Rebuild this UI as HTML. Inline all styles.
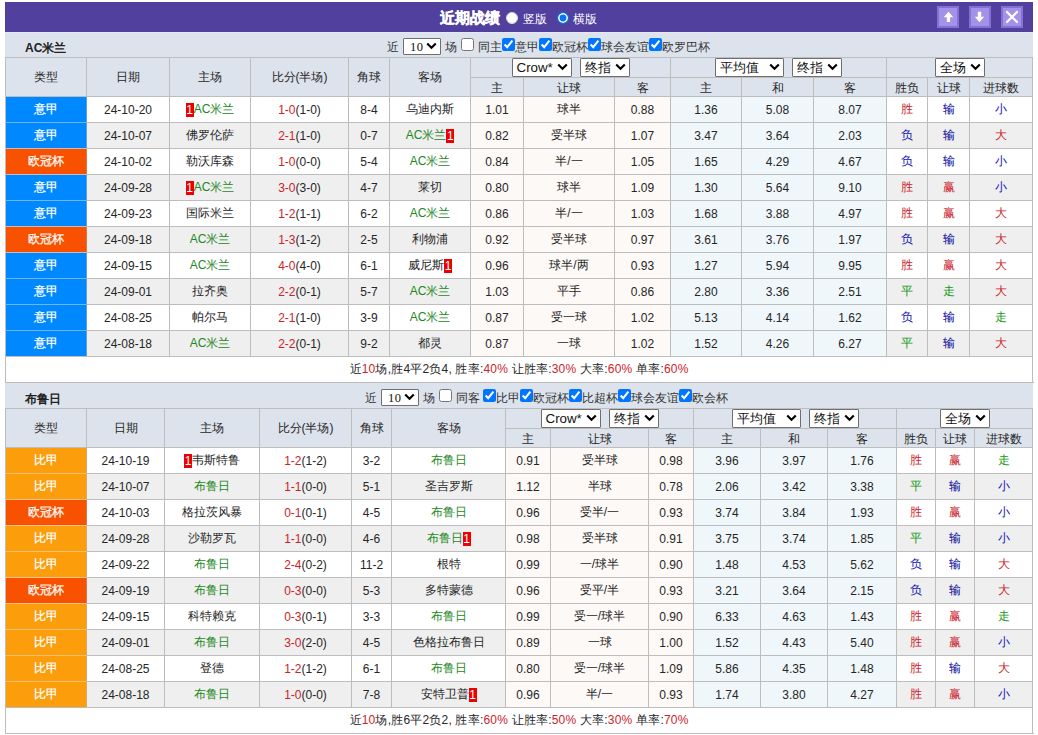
<!DOCTYPE html>
<html><head><meta charset="utf-8"><style>
*{box-sizing:border-box}
html,body{margin:0;padding:0;background:#fff;width:1038px;height:735px;overflow:hidden;
 font-family:"Liberation Sans",sans-serif;font-size:12px;color:#262626}
.a{position:absolute;white-space:nowrap}
.bar{position:absolute;left:5px;top:2px;width:1028px;height:30px;background:#51409e}
.title{left:440px;top:9px;color:#fff;font-weight:bold;-webkit-text-stroke:0.4px #fff;font-size:15px;line-height:17px}
.rlab{top:12px;color:#fff;font-size:12px;line-height:14px}
.rad{position:absolute;width:12px;height:12px;border-radius:50%;top:12px}
.rad.off{background:#fff;border:1px solid #d8d8e8}
.rad.on{background:#0a74f0;border:1.6px solid #0a74f0;box-shadow:inset 0 0 0 1.6px #fff}
.btn{position:absolute;top:6px;width:22px;height:22px;background:#a393e8;border:2px solid #8272d4}
.btn svg{position:absolute;left:-2px;top:-2px}
.sec{position:absolute;left:5px;width:1028px;height:25px;background:#dde3ec}
.lab{position:absolute;left:20px;top:9px;font-weight:bold;color:#222;font-size:12px;line-height:14px}
.ot{color:#333;font-size:12px;line-height:14px}
.cbx{position:absolute;margin:0;width:13px;height:13px}
.fs{display:inline-block;position:relative;height:19px;border:1px solid #6f6f6f;border-radius:1px;background:#fff;vertical-align:top;text-align:left}
.fs.ml{margin-left:8px}
.fs .ft{position:absolute;left:4px;top:1px;font-size:13.333px;line-height:15px;color:#111}
.fs .chev{position:absolute;right:3px;top:4px}
.osel{position:absolute;height:17px}
.osel .ft{font-family:"Liberation Serif",serif;font-size:12.5px;top:1px;left:6px;letter-spacing:0.5px}
.osel .chev{top:3px}
.tb{position:absolute;left:5px;border-collapse:collapse;table-layout:fixed;width:1028px}
.tb td{border:1px solid #bdbdbd;text-align:center;padding:0;white-space:nowrap;overflow:hidden}
.tb tr.h1 td{background:#dde3ec;height:20px;vertical-align:top}
.tb tr.h2 td{background:#dde3ec;height:19px;padding-top:1px;line-height:16px}
.tb tr.h1 td[rowspan]{height:39px;vertical-align:middle}
.tb tr.od td,.tb tr.ev td{height:26px}
.tb tr.ev td{background:#efefef}
.tb tr td.oc{background:#fdf9f6}
.tb tr td.av{background:#f0f7fb}
.tb td.ty{color:#fff;-webkit-text-stroke:0.25px #fff}
.tA{background:#0088ff !important;border-right-color:#5f9fd8 !important}
.tB{background:#f85100 !important;border-right-color:#d87850 !important}
.tC{background:#fc9d0b !important;border-right-color:#d8a868 !important}
.tb tr.sm td{height:26px;background:#fff;letter-spacing:0.2px}
.g{color:#1e881e}
.cr{color:#cc2229}
.cb{color:#1111bb}
.cb2{color:#000099}
.cg{color:#119911}
.rc{font-style:normal;background:#e00;color:#fff;display:inline-block;width:8px;height:14px;line-height:14px;font-size:12px;vertical-align:-3px;overflow:hidden;position:relative;top:1px}
</style></head><body>
<div class="bar"></div>
<div class="a title">近期战绩</div>
<div class="rad off" style="left:506px"></div><div class="a rlab" style="left:523px">竖版</div>
<div class="rad on" style="left:557px"></div><div class="a rlab" style="left:573px">横版</div>
<div class="btn" style="left:937px"><svg width="22" height="22" viewBox="0 0 22 22"><path d="M11.45 5.8 L16.2 11.3 L13.1 11.3 L13.1 15.9 L9.8 15.9 L9.8 11.3 L6.7 11.3 Z" fill="#fff"/></svg></div>
<div class="btn" style="left:969px"><svg width="22" height="22" viewBox="0 0 22 22"><path d="M10.5 16.2 L15.1 10.8 L12.2 10.8 L12.2 5.8 L8.8 5.8 L8.8 10.8 L5.9 10.8 Z" fill="#fff"/></svg></div>
<div class="btn" style="left:1001px"><svg width="22" height="22" viewBox="0 0 22 22"><path d="M6 6 L16 16 M16 6 L6 16" stroke="#fff" stroke-width="2.2" stroke-linecap="round"/></svg></div>
<div class="sec" style="top:32px;border-top:1px solid #e8e6fa"><div class="lab" style="top:8px">AC米兰</div></div>
<div class="a ot" style="left:387px;top:40px">近</div>
<span class="fs osel" style="left:403px;top:38px;width:38px"><span class="ft">10</span><svg class="chev" width="11" height="8" viewBox="0 0 11 8"><path d="M1.2 1.5 L5.5 5.8 L9.8 1.5" fill="none" stroke="#000" stroke-width="2.1"/></svg></span>
<div class="a ot" style="left:445px;top:40px">场</div>
<input type="checkbox" class="cbx" style="left:461px;top:38px">
<div class="a ot" style="left:478px;top:40px">同主</div>
<input type="checkbox" class="cbx" style="left:502px;top:38px" checked>
<div class="a ot" style="left:515px;top:40px">意甲</div>
<input type="checkbox" class="cbx" style="left:539px;top:38px" checked>
<div class="a ot" style="left:552px;top:40px">欧冠杯</div>
<input type="checkbox" class="cbx" style="left:588px;top:38px" checked>
<div class="a ot" style="left:601px;top:40px">球会友谊</div>
<input type="checkbox" class="cbx" style="left:649px;top:38px" checked>
<div class="a ot" style="left:662px;top:40px">欧罗巴杯</div>
<table class="tb" style="top:57px">
<colgroup><col style="width:81px"><col style="width:83px"><col style="width:81px"><col style="width:98px"><col style="width:41px"><col style="width:81px"><col style="width:53px"><col style="width:91px"><col style="width:56px"><col style="width:71px"><col style="width:72px"><col style="width:73px"><col style="width:41px"><col style="width:42px"><col style="width:63px"></colgroup>
<tr class="h1"><td rowspan="2">类型</td><td rowspan="2">日期</td><td rowspan="2">主场</td><td rowspan="2">比分(半场)</td><td rowspan="2">角球</td><td rowspan="2">客场</td><td colspan="3"><span class="fs " style="width:60px"><span class="ft">Crow*</span><svg class="chev" width="11" height="8" viewBox="0 0 11 8"><path d="M1.2 1.5 L5.5 5.8 L9.8 1.5" fill="none" stroke="#000" stroke-width="2.1"/></svg></span><span class="fs ml" style="width:50px"><span class="ft">终指</span><svg class="chev" width="11" height="8" viewBox="0 0 11 8"><path d="M1.2 1.5 L5.5 5.8 L9.8 1.5" fill="none" stroke="#000" stroke-width="2.1"/></svg></span></td><td colspan="3"><span class="fs " style="width:69px"><span class="ft">平均值</span><svg class="chev" width="11" height="8" viewBox="0 0 11 8"><path d="M1.2 1.5 L5.5 5.8 L9.8 1.5" fill="none" stroke="#000" stroke-width="2.1"/></svg></span><span class="fs ml" style="width:50px"><span class="ft">终指</span><svg class="chev" width="11" height="8" viewBox="0 0 11 8"><path d="M1.2 1.5 L5.5 5.8 L9.8 1.5" fill="none" stroke="#000" stroke-width="2.1"/></svg></span></td><td colspan="3"><span class="fs " style="width:50px"><span class="ft">全场</span><svg class="chev" width="11" height="8" viewBox="0 0 11 8"><path d="M1.2 1.5 L5.5 5.8 L9.8 1.5" fill="none" stroke="#000" stroke-width="2.1"/></svg></span></td></tr>
<tr class="h2"><td>主</td><td>让球</td><td>客</td><td>主</td><td>和</td><td>客</td><td>胜负</td><td>让球</td><td>进球数</td></tr>
<tr class="od"><td class="ty tA" style="border-bottom-color:#72b6f1 !important">意甲</td><td>24-10-20</td><td><span class="g"><i class="rc">1</i>AC米兰</span></td><td><span class="cr">1-0</span>(1-0)</td><td>8-4</td><td><span>乌迪内斯</span></td><td class="oc">1.01</td><td class="oc">球半</td><td class="oc">0.88</td><td class="av">1.36</td><td class="av">5.08</td><td class="av">8.07</td><td><span class="cr">胜</span></td><td><span class="cb2">输</span></td><td><span class="cb">小</span></td></tr>
<tr class="ev"><td class="ty tA" style="border-bottom-color:#c4bdc5 !important">意甲</td><td>24-10-07</td><td><span>佛罗伦萨</span></td><td><span class="cr">2-1</span>(1-0)</td><td>0-7</td><td><span class="g">AC米兰<i class="rc">1</i></span></td><td class="oc">0.82</td><td class="oc">受半球</td><td class="oc">1.07</td><td class="av">3.47</td><td class="av">3.64</td><td class="av">2.03</td><td><span class="cb">负</span></td><td><span class="cb2">输</span></td><td><span class="cr">大</span></td></tr>
<tr class="od"><td class="ty tB" style="border-bottom-color:#c4bdc5 !important">欧冠杯</td><td>24-10-02</td><td><span>勒沃库森</span></td><td><span class="cr">1-0</span>(0-0)</td><td>5-4</td><td><span class="g">AC米兰</span></td><td class="oc">0.84</td><td class="oc">半/一</td><td class="oc">1.05</td><td class="av">1.65</td><td class="av">4.29</td><td class="av">4.67</td><td><span class="cb">负</span></td><td><span class="cb2">输</span></td><td><span class="cb">小</span></td></tr>
<tr class="ev"><td class="ty tA" style="border-bottom-color:#72b6f1 !important">意甲</td><td>24-09-28</td><td><span class="g"><i class="rc">1</i>AC米兰</span></td><td><span class="cr">3-0</span>(3-0)</td><td>4-7</td><td><span>莱切</span></td><td class="oc">0.80</td><td class="oc">球半</td><td class="oc">1.09</td><td class="av">1.30</td><td class="av">5.64</td><td class="av">9.10</td><td><span class="cr">胜</span></td><td><span class="cr">赢</span></td><td><span class="cb">小</span></td></tr>
<tr class="od"><td class="ty tA" style="border-bottom-color:#c4bdc5 !important">意甲</td><td>24-09-23</td><td><span>国际米兰</span></td><td><span class="cr">1-2</span>(1-1)</td><td>6-2</td><td><span class="g">AC米兰</span></td><td class="oc">0.86</td><td class="oc">半/一</td><td class="oc">1.03</td><td class="av">1.68</td><td class="av">3.88</td><td class="av">4.97</td><td><span class="cr">胜</span></td><td><span class="cr">赢</span></td><td><span class="cr">大</span></td></tr>
<tr class="ev"><td class="ty tB" style="border-bottom-color:#c4bdc5 !important">欧冠杯</td><td>24-09-18</td><td><span class="g">AC米兰</span></td><td><span class="cr">1-3</span>(1-2)</td><td>2-5</td><td><span>利物浦</span></td><td class="oc">0.92</td><td class="oc">受半球</td><td class="oc">0.97</td><td class="av">3.61</td><td class="av">3.76</td><td class="av">1.97</td><td><span class="cb">负</span></td><td><span class="cb2">输</span></td><td><span class="cr">大</span></td></tr>
<tr class="od"><td class="ty tA" style="border-bottom-color:#72b6f1 !important">意甲</td><td>24-09-15</td><td><span class="g">AC米兰</span></td><td><span class="cr">4-0</span>(4-0)</td><td>6-1</td><td><span>威尼斯<i class="rc">1</i></span></td><td class="oc">0.96</td><td class="oc">球半/两</td><td class="oc">0.93</td><td class="av">1.27</td><td class="av">5.94</td><td class="av">9.95</td><td><span class="cr">胜</span></td><td><span class="cr">赢</span></td><td><span class="cr">大</span></td></tr>
<tr class="ev"><td class="ty tA" style="border-bottom-color:#72b6f1 !important">意甲</td><td>24-09-01</td><td><span>拉齐奥</span></td><td><span class="cr">2-2</span>(0-1)</td><td>5-7</td><td><span class="g">AC米兰</span></td><td class="oc">1.03</td><td class="oc">平手</td><td class="oc">0.86</td><td class="av">2.80</td><td class="av">3.36</td><td class="av">2.51</td><td><span class="cg">平</span></td><td><span class="cg">走</span></td><td><span class="cr">大</span></td></tr>
<tr class="od"><td class="ty tA" style="border-bottom-color:#72b6f1 !important">意甲</td><td>24-08-25</td><td><span>帕尔马</span></td><td><span class="cr">2-1</span>(1-0)</td><td>3-9</td><td><span class="g">AC米兰</span></td><td class="oc">0.87</td><td class="oc">受一球</td><td class="oc">1.02</td><td class="av">5.13</td><td class="av">4.14</td><td class="av">1.62</td><td><span class="cb">负</span></td><td><span class="cb2">输</span></td><td><span class="cg">走</span></td></tr>
<tr class="ev"><td class="ty tA">意甲</td><td>24-08-18</td><td><span class="g">AC米兰</span></td><td><span class="cr">2-2</span>(0-1)</td><td>9-2</td><td><span>都灵</span></td><td class="oc">0.87</td><td class="oc">一球</td><td class="oc">1.02</td><td class="av">1.52</td><td class="av">4.26</td><td class="av">6.27</td><td><span class="cg">平</span></td><td><span class="cb2">输</span></td><td><span class="cr">大</span></td></tr>
<tr class="sm"><td colspan="16">近<span class="cr">10</span>场,胜4平2负4, 胜率:<span class="cr">40%</span> 让胜率:<span class="cr">30%</span> 大率:<span class="cr">60%</span> 单率:<span class="cr">60%</span></td></tr>
</table>
<div class="sec" style="top:383px"><div class="lab">布鲁日</div></div>
<div class="a ot" style="left:365px;top:391px">近</div>
<span class="fs osel" style="left:381px;top:389px;width:38px"><span class="ft">10</span><svg class="chev" width="11" height="8" viewBox="0 0 11 8"><path d="M1.2 1.5 L5.5 5.8 L9.8 1.5" fill="none" stroke="#000" stroke-width="2.1"/></svg></span>
<div class="a ot" style="left:423px;top:391px">场</div>
<input type="checkbox" class="cbx" style="left:439px;top:389px">
<div class="a ot" style="left:456px;top:391px">同客</div>
<input type="checkbox" class="cbx" style="left:483px;top:389px" checked>
<div class="a ot" style="left:496px;top:391px">比甲</div>
<input type="checkbox" class="cbx" style="left:520px;top:389px" checked>
<div class="a ot" style="left:533px;top:391px">欧冠杯</div>
<input type="checkbox" class="cbx" style="left:569px;top:389px" checked>
<div class="a ot" style="left:582px;top:391px">比超杯</div>
<input type="checkbox" class="cbx" style="left:618px;top:389px" checked>
<div class="a ot" style="left:631px;top:391px">球会友谊</div>
<input type="checkbox" class="cbx" style="left:679px;top:389px" checked>
<div class="a ot" style="left:692px;top:391px">欧会杯</div>
<table class="tb" style="top:408px">
<colgroup><col style="width:81px"><col style="width:78px"><col style="width:95px"><col style="width:92px"><col style="width:40px"><col style="width:114px"><col style="width:45px"><col style="width:98px"><col style="width:45px"><col style="width:67px"><col style="width:67px"><col style="width:69px"><col style="width:39px"><col style="width:39px"><col style="width:58px"></colgroup>
<tr class="h1"><td rowspan="2">类型</td><td rowspan="2">日期</td><td rowspan="2">主场</td><td rowspan="2">比分(半场)</td><td rowspan="2">角球</td><td rowspan="2">客场</td><td colspan="3"><span class="fs " style="width:60px"><span class="ft">Crow*</span><svg class="chev" width="11" height="8" viewBox="0 0 11 8"><path d="M1.2 1.5 L5.5 5.8 L9.8 1.5" fill="none" stroke="#000" stroke-width="2.1"/></svg></span><span class="fs ml" style="width:50px"><span class="ft">终指</span><svg class="chev" width="11" height="8" viewBox="0 0 11 8"><path d="M1.2 1.5 L5.5 5.8 L9.8 1.5" fill="none" stroke="#000" stroke-width="2.1"/></svg></span></td><td colspan="3"><span class="fs " style="width:69px"><span class="ft">平均值</span><svg class="chev" width="11" height="8" viewBox="0 0 11 8"><path d="M1.2 1.5 L5.5 5.8 L9.8 1.5" fill="none" stroke="#000" stroke-width="2.1"/></svg></span><span class="fs ml" style="width:50px"><span class="ft">终指</span><svg class="chev" width="11" height="8" viewBox="0 0 11 8"><path d="M1.2 1.5 L5.5 5.8 L9.8 1.5" fill="none" stroke="#000" stroke-width="2.1"/></svg></span></td><td colspan="3"><span class="fs " style="width:50px"><span class="ft">全场</span><svg class="chev" width="11" height="8" viewBox="0 0 11 8"><path d="M1.2 1.5 L5.5 5.8 L9.8 1.5" fill="none" stroke="#000" stroke-width="2.1"/></svg></span></td></tr>
<tr class="h2"><td>主</td><td>让球</td><td>客</td><td>主</td><td>和</td><td>客</td><td>胜负</td><td>让球</td><td>进球数</td></tr>
<tr class="od"><td class="ty tC" style="border-bottom-color:#f0c077 !important">比甲</td><td>24-10-19</td><td><span><i class="rc">1</i>韦斯特鲁</span></td><td><span class="cr">1-2</span>(1-2)</td><td>3-2</td><td><span class="g">布鲁日</span></td><td class="oc">0.91</td><td class="oc">受半球</td><td class="oc">0.98</td><td class="av">3.96</td><td class="av">3.97</td><td class="av">1.76</td><td><span class="cr">胜</span></td><td><span class="cr">赢</span></td><td><span class="cg">走</span></td></tr>
<tr class="ev"><td class="ty tC" style="border-bottom-color:#fcc18e !important">比甲</td><td>24-10-07</td><td><span class="g">布鲁日</span></td><td><span class="cr">1-1</span>(0-0)</td><td>5-1</td><td><span>圣吉罗斯</span></td><td class="oc">1.12</td><td class="oc">半球</td><td class="oc">0.78</td><td class="av">2.06</td><td class="av">3.42</td><td class="av">3.38</td><td><span class="cg">平</span></td><td><span class="cb2">输</span></td><td><span class="cb">小</span></td></tr>
<tr class="od"><td class="ty tB" style="border-bottom-color:#fcc18e !important">欧冠杯</td><td>24-10-03</td><td><span>格拉茨风暴</span></td><td><span class="cr">0-1</span>(0-1)</td><td>4-5</td><td><span class="g">布鲁日</span></td><td class="oc">0.96</td><td class="oc">受半/一</td><td class="oc">0.93</td><td class="av">3.74</td><td class="av">3.84</td><td class="av">1.93</td><td><span class="cr">胜</span></td><td><span class="cr">赢</span></td><td><span class="cb">小</span></td></tr>
<tr class="ev"><td class="ty tC" style="border-bottom-color:#f0c077 !important">比甲</td><td>24-09-28</td><td><span>沙勒罗瓦</span></td><td><span class="cr">1-1</span>(0-0)</td><td>4-6</td><td><span class="g">布鲁日<i class="rc">1</i></span></td><td class="oc">0.98</td><td class="oc">受半球</td><td class="oc">0.91</td><td class="av">3.75</td><td class="av">3.74</td><td class="av">1.85</td><td><span class="cg">平</span></td><td><span class="cb2">输</span></td><td><span class="cb">小</span></td></tr>
<tr class="od"><td class="ty tC" style="border-bottom-color:#fcc18e !important">比甲</td><td>24-09-22</td><td><span class="g">布鲁日</span></td><td><span class="cr">2-4</span>(0-2)</td><td>11-2</td><td><span>根特</span></td><td class="oc">0.99</td><td class="oc">一/球半</td><td class="oc">0.90</td><td class="av">1.48</td><td class="av">4.53</td><td class="av">5.62</td><td><span class="cb">负</span></td><td><span class="cb2">输</span></td><td><span class="cr">大</span></td></tr>
<tr class="ev"><td class="ty tB" style="border-bottom-color:#fcc18e !important">欧冠杯</td><td>24-09-19</td><td><span class="g">布鲁日</span></td><td><span class="cr">0-3</span>(0-0)</td><td>5-3</td><td><span>多特蒙德</span></td><td class="oc">0.96</td><td class="oc">受平/半</td><td class="oc">0.93</td><td class="av">3.21</td><td class="av">3.64</td><td class="av">2.15</td><td><span class="cb">负</span></td><td><span class="cb2">输</span></td><td><span class="cr">大</span></td></tr>
<tr class="od"><td class="ty tC" style="border-bottom-color:#f0c077 !important">比甲</td><td>24-09-15</td><td><span>科特赖克</span></td><td><span class="cr">0-3</span>(0-1)</td><td>3-3</td><td><span class="g">布鲁日</span></td><td class="oc">0.99</td><td class="oc">受一/球半</td><td class="oc">0.90</td><td class="av">6.33</td><td class="av">4.63</td><td class="av">1.43</td><td><span class="cr">胜</span></td><td><span class="cr">赢</span></td><td><span class="cg">走</span></td></tr>
<tr class="ev"><td class="ty tC" style="border-bottom-color:#f0c077 !important">比甲</td><td>24-09-01</td><td><span class="g">布鲁日</span></td><td><span class="cr">3-0</span>(2-0)</td><td>4-5</td><td><span>色格拉布鲁日</span></td><td class="oc">0.89</td><td class="oc">一球</td><td class="oc">1.00</td><td class="av">1.52</td><td class="av">4.43</td><td class="av">5.40</td><td><span class="cr">胜</span></td><td><span class="cr">赢</span></td><td><span class="cb">小</span></td></tr>
<tr class="od"><td class="ty tC" style="border-bottom-color:#f0c077 !important">比甲</td><td>24-08-25</td><td><span>登德</span></td><td><span class="cr">1-2</span>(1-2)</td><td>6-1</td><td><span class="g">布鲁日</span></td><td class="oc">0.80</td><td class="oc">受一/球半</td><td class="oc">1.09</td><td class="av">5.86</td><td class="av">4.35</td><td class="av">1.48</td><td><span class="cr">胜</span></td><td><span class="cb2">输</span></td><td><span class="cr">大</span></td></tr>
<tr class="ev"><td class="ty tC">比甲</td><td>24-08-18</td><td><span class="g">布鲁日</span></td><td><span class="cr">1-0</span>(0-0)</td><td>7-8</td><td><span>安特卫普<i class="rc">1</i></span></td><td class="oc">0.96</td><td class="oc">半/一</td><td class="oc">0.93</td><td class="av">1.74</td><td class="av">3.80</td><td class="av">4.27</td><td><span class="cr">胜</span></td><td><span class="cr">赢</span></td><td><span class="cb">小</span></td></tr>
<tr class="sm"><td colspan="16">近<span class="cr">10</span>场,胜6平2负2, 胜率:<span class="cr">60%</span> 让胜率:<span class="cr">50%</span> 大率:<span class="cr">30%</span> 单率:<span class="cr">70%</span></td></tr>
</table>
</body></html>
